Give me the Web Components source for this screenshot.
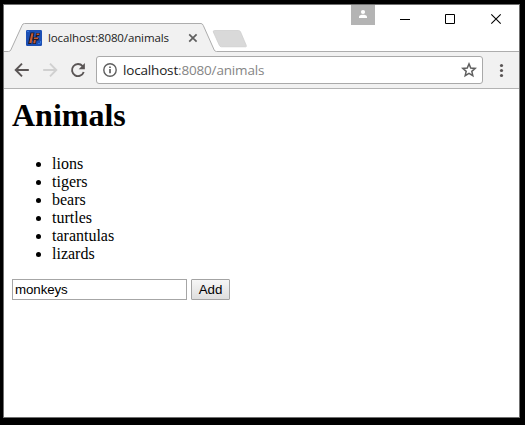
<!DOCTYPE html>
<html lang="en">
<head>
<meta charset="utf-8">
<title>Animals</title>
<style>
html,body{margin:0;background:#000;height:100%;overflow:hidden}
</style>
</head>
<body>
<browser-window></browser-window>
<script>
function define(name, html) {
  const template = document.createElement('template');
  template.innerHTML = html;
  customElements.define(name, class extends HTMLElement {
    constructor() {
      super();
      this.attachShadow({mode: 'open'}).append(template.content.cloneNode(true));
    }
  });
}

define('window-controls', `
<style>
:host{display:flex;height:20px}
svg{display:block}
</style>
<svg width="168" height="20" viewBox="351 5 168 20">
  <rect x="351" y="5" width="24" height="20" fill="#b4b4b4"/>
  <circle cx="363" cy="12" r="2.1" fill="#fff"/>
  <path d="M359 18v-1.2c0-1.4 2.2-2 4-2s4 .6 4 2V18z" fill="#fff"/>
  <path d="M400 19.500h10" stroke="#000"/>
  <path d="M445.500 14.500h9v9h-9z" stroke="#000" fill="none"/>
  <path d="M491.300 14.300l9.400 9.400M500.700 14.300l-9.400 9.400" stroke="#000" stroke-width="1.1"/>
</svg>`);

define('tab-strip', `
<style>
:host{display:flex;height:47px;background:#fff;position:relative;justify-content:flex-end}
.shape{position:absolute;left:0;top:0}
.tab{position:absolute;left:22px;top:25px;height:16px;display:flex;align-items:center}
.title{font:11.500px/16px "Open Sans","Noto Sans",sans-serif;color:#222;margin-left:6px;width:140px;white-space:nowrap;letter-spacing:-.12px}
svg{display:block;flex:none}
</style>
<svg class="shape" width="515" height="47" viewBox="4 5 515 47">
  <path d="M4 51.500H8.500Q10 51.500 10.800 50L22 25.500Q22.600 23.500 24.500 23.500H201Q202.500 23.500 203.300 25.500L214.200 50Q215 51.500 216.500 51.500V52H4z" fill="#f1f1f1"/>
  <path d="M4 51.500H8.500Q10 51.500 10.800 50L22 25.500Q22.600 23.500 24.500 23.500H201Q202.500 23.500 203.300 25.500L214.200 50Q215 51.500 216.500 51.500H519" fill="none" stroke="#adadad"/>
  <path d="M214.500 30.500H238.500Q240 30.500 240.600 32L246.300 45.500Q246.800 46.800 245.500 46.800H221.500Q220 46.800 219.300 45.300L213.300 32Q212.800 30.500 214.500 30.500z" fill="#d9d9d9" stroke="#cbcbcb" stroke-width=".7"/>
</svg>
<div class="tab">
  <svg width="16" height="16" viewBox="0 0 16 16">
    <rect width="16" height="16" rx="1.200" fill="#1c4fb4"/>
    <path d="M2 14L4.500 2.500H8.500L7.500 7H9.500L10.200 3H14L13.200 6H11.300L11 8H13L12.400 10.500H10.500L10 14H6.500L7 10.500H6L5.200 14z" fill="#1d1a2d"/>
    <path d="M5.400 3.200H7.400L5.600 13H3.300zM10.600 3.500H13.400L13.100 5H10.600zM8.100 7.500H12.400L12 9H7.900zM8 10H9.800L9.300 13.200H7.200z" fill="#c65a32"/>
    <path d="M1 1.500H3M12 13.500h2.500M14.500 11v2" stroke="#3c82e6" stroke-width=".8"/>
  </svg>
  <span class="title"><slot></slot></span>
  <svg width="10" height="16" viewBox="0 0 10 16"><path d="M1.200 4.300l7.400 7.400M8.600 4.300L1.200 11.700" stroke="#5f5f5f" stroke-width="1.700"/></svg>
</div>
<window-controls></window-controls>`);

define('address-bar', `
<style>
:host{display:flex;box-sizing:border-box;width:387px;height:28px;border:1px solid #a9a9a9;border-radius:3px;background:#fff;align-items:center;padding:0 5px 0 6px}
svg{display:block;flex:none}
.url{flex:1;margin-left:5px;font:13.500px/20px "Open Sans","Noto Sans",sans-serif;color:#222;white-space:nowrap;letter-spacing:-.17px}
::slotted(span){color:#858585}
</style>
<svg width="15" height="16" viewBox="0 0 15 16"><circle cx="7" cy="8" r="6.200" fill="none" stroke="#5f5f5f" stroke-width="1.400"/><path d="M7 7v4.300M7 4.500v1.500" stroke="#5f5f5f" stroke-width="1.700"/></svg>
<span class="url"><slot></slot></span>
<svg width="16" height="16" viewBox="0 0 16 16"><path d="M8 1.900L9.750 6.020 14.180 6.400 10.820 9.330 11.820 13.700 8 11.400 4.180 13.700 5.180 9.330 1.820 6.400 6.250 6.020z" fill="none" stroke="#5f5f5f" stroke-width="1.500"/></svg>`);

define('browser-toolbar', `
<style>
:host{display:flex;box-sizing:border-box;height:37px;background:#f1f1f1;border-bottom:1px solid #b3b3b3;padding:4px 0 0}
svg{display:block;flex:none}
</style>
<svg width="92" height="28" viewBox="4 56 92 28" fill="none">
  <path d="M28.800 70H16.200M22 63.700L15.700 70l6.300 6.300" stroke="#5a5555" stroke-width="1.900"/>
  <path d="M43.200 70h12.600M50 63.700l6.300 6.300-6.300 6.300" stroke="#d0d0d0" stroke-width="1.900"/>
  <path d="M82.600 66.200A6 6 0 1 0 83.700 72" stroke="#5a5555" stroke-width="1.900"/>
  <path d="M84.900 63v6.200h-6.200z" fill="#5a5555"/>
</svg>
<address-bar>localhost<span>:8080/animals</span></address-bar>
<svg width="36" height="28" viewBox="483 56 36 28" fill="#5a5555"><circle cx="501.500" cy="65.500" r="1.600"/><circle cx="501.500" cy="70.500" r="1.600"/><circle cx="501.500" cy="75.500" r="1.600"/></svg>`);

define('animals-page', `
<style>
:host{display:block;padding:8px;font:16px/18px "Liberation Serif","Times New Roman",serif;color:#000}
h1{font-size:32px;line-height:37px;margin:0 0 21px}
ul{margin:0 0 16px;padding-left:40px;font-size:16px}
form{display:flex;gap:4px;margin:0}
input,button{box-sizing:border-box;height:21px;font:13.333px "Liberation Sans",Arial,sans-serif;color:#000;border-radius:0;outline:none}
input{width:175px;border:1px solid #a6a6a6;padding:1px 2px;background:#fff;letter-spacing:-.1px}
button{width:39px;border:1px solid #a3a3a3;border-radius:1px;padding:0;background:linear-gradient(#f6f6f6,#dedede)}
</style>
<h1>Animals</h1>
<ul><li>lions</li><li>tigers</li><li>bears</li><li>turtles</li><li>tarantulas</li><li>lizards</li></ul>
<form><input type="text" value="monkeys" spellcheck="false"><button type="button">Add</button></form>`);

define('browser-window', `
<style>
:host{display:block;box-sizing:border-box;width:517px;height:414px;margin:4px 0 0 3px;border:1px solid #707070;background:#fff}
</style>
<tab-strip>localhost:8080/animals</tab-strip>
<browser-toolbar></browser-toolbar>
<animals-page></animals-page>`);
</script>
</body>
</html>
